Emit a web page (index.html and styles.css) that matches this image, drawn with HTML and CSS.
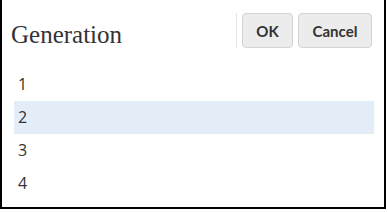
FILE: index.html
```html
<!DOCTYPE html>
<html lang="en">
<head>
    <meta charset="UTF-8">
    <title>Generation</title>
    <link rel="stylesheet" href="styles.css">
</head>
<body>
    <div class="dialog">
        <div class="dialog-header">
            <h1 class="dialog-title">Generation</h1>
            <div class="dialog-actions">
                <span class="divider"></span>
                <button class="btn btn-ok">OK</button>
                <button class="btn btn-cancel">Cancel</button>
            </div>
        </div>
        <ul class="list">
            <li class="list-item">1</li>
            <li class="list-item selected">2</li>
            <li class="list-item">3</li>
            <li class="list-item">4</li>
        </ul>
    </div>
</body>
</html>
```

FILE: styles.css
```css
body {
    margin: 0;
    background-color: #fff;
}
.dialog {
    width: 386px;
    height: 209px;
    box-sizing: border-box;
    border: 2px solid #000;
    border-top: none;
    background-color: #fff;
}
.dialog-header {
    display: flex;
    align-items: center;
    justify-content: space-between;
    height: 61px;
    padding: 0 12px 0 9px;
}
.dialog-title {
    margin: 8px 0 0 0;
    font-family: "Liberation Serif", serif;
    font-weight: normal;
    font-size: 25px;
    color: #333;
}
.dialog-actions {
    display: flex;
    align-items: center;
    gap: 5px;
}
.divider {
    width: 1px;
    height: 35px;
    background-color: #e4e4e4;
}
.btn {
    height: 35px;
    padding: 0;
    background-color: #ececec;
    border: 1px solid #d3d3d3;
    border-radius: 4px;
    font-family: Lato, sans-serif;
    font-weight: bold;
    font-size: 15px;
    color: #333;
}
.btn-ok {
    width: 51px;
}
.btn-cancel {
    width: 74px;
}
.list {
    list-style: none;
    margin: 7px 10px 0 12px;
    padding: 0;
}
.list-item {
    height: 33px;
    line-height: 33px;
    padding-left: 4px;
    font-family: "Open Sans", sans-serif;
    font-size: 16px;
    color: #333;
}
.list-item.selected {
    background-color: #e2edf8;
}
```
